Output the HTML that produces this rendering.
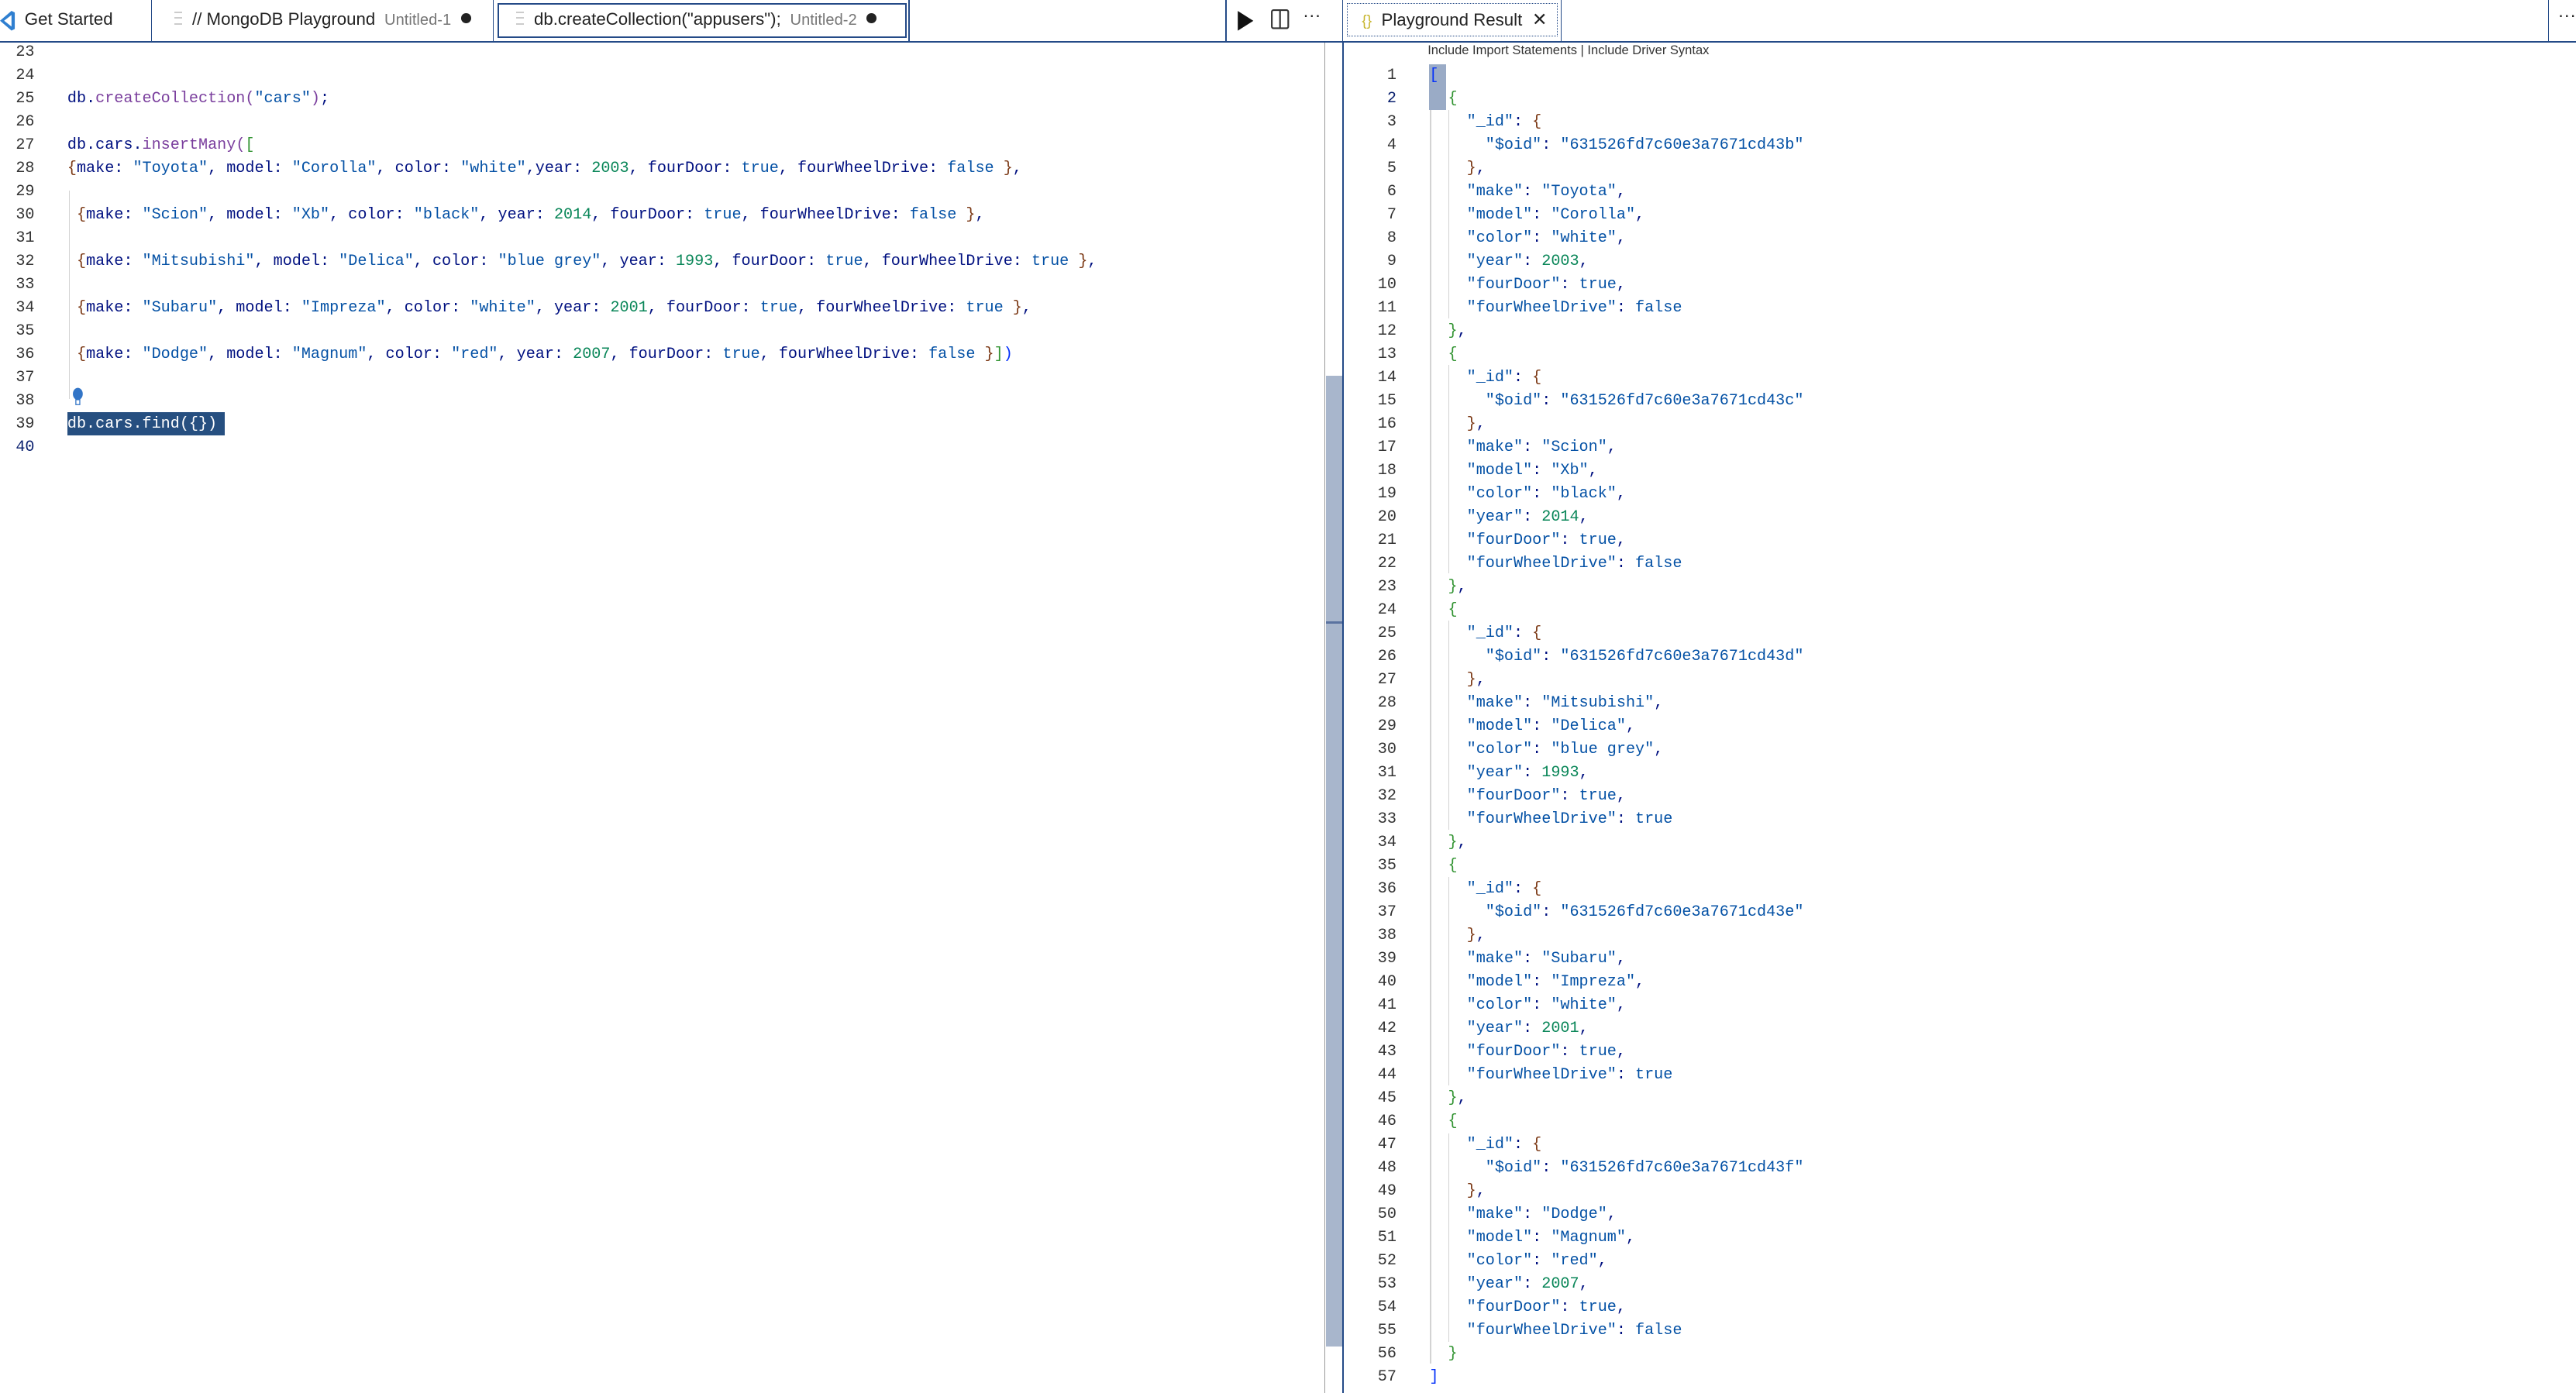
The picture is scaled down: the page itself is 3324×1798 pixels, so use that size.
<!DOCTYPE html>
<html><head><meta charset="utf-8"><style>
html,body{margin:0;padding:0;background:#fff;overflow:hidden}
#w{zoom:2.1199;width:1568px;height:848px;position:relative;overflow:hidden;font-family:"Liberation Sans",sans-serif}
.abs{position:absolute}
.tabbar{left:0;top:0;width:1568px;height:25px;border-bottom:1.3px solid #244a87}
.tab{position:absolute;top:0;height:25px;font-size:10.5px;color:#222;line-height:24px;white-space:nowrap}
.sep{position:absolute;top:0;width:0.6px;height:25px;background:#244a87}
.sub{color:#777;font-size:9.5px}
.dot{display:inline-block;width:6px;height:6px;border-radius:3px;background:#222;margin-left:6px;vertical-align:1px}
.fi{display:inline-block;width:5px;height:6px;border-top:1px solid #ccc;border-bottom:1px solid #ccc;margin-right:6px;vertical-align:0;position:relative}
.fi:after{content:"";position:absolute;left:0;top:2px;width:5px;border-top:1px solid #ccc}
.code{font-family:"Liberation Mono",monospace;font-size:9.5px;line-height:14.15px;white-space:pre;color:#001080}
.ln{text-align:right;color:#333}
.k{color:#001080}.s{color:#0451a5}.n{color:#098658}.b{color:#0000ff}.f{color:#7a3e9d}.br{color:#7b3814}.g{color:#319331}.bl{color:#0431fa}
.jk{color:#0451a5}.js{color:#0451a5}
</style></head><body><div id="w">
<div class="abs tabbar"></div>
<svg class="abs" style="left:0;top:6px" width="10" height="13" viewBox="0 0 10 13"><path d="M0 6.5 L7 0.5 L9 1.5 L9 11.5 L7 12.5 Z M2.5 6.5 L7 10 L7 3 Z" fill="#2f7fd0" fill-rule="evenodd"/></svg>
<div class="tab" style="left:15px">Get Started</div>
<div class="sep" style="left:92px"></div>
<div class="tab" style="left:106px"><span class="fi"></span>// MongoDB Playground <span class="sub">&nbsp;Untitled-1</span><span class="dot"></span></div>
<div class="sep" style="left:300px"></div>
<div class="abs" style="left:303px;top:2px;width:247px;height:19px;border:1px solid #244a87"></div>
<div class="tab" style="left:314px"><span class="fi"></span>db.createCollection("appusers"); <span class="sub">&nbsp;Untitled-2</span><span class="dot"></span></div>
<div class="sep" style="left:553px"></div>
<div class="sep" style="left:746px"></div>
<svg class="abs" style="left:752px;top:5px" width="12" height="15"><path d="M1.5 1.5 L11 7.5 L1.5 13.5Z" fill="#111"/></svg>
<svg class="abs" style="left:773px;top:5px" width="12" height="13"><rect x="1" y="1" width="10" height="11" rx="1" fill="none" stroke="#333" stroke-width="1"/><line x1="6" y1="1" x2="6" y2="12" stroke="#333"/></svg>
<div class="tab" style="left:793px;font-size:11px;top:-3px">···</div>
<div class="sep" style="left:817px"></div>
<div class="abs" style="left:820px;top:2px;width:127px;height:19px;border:0.6px dotted #244a87"></div>
<div class="tab" style="left:829px"><span style="color:#c7b52c;font-size:9px">{}</span>&nbsp; Playground Result <span style="font-size:11px;margin-left:3px">✕</span></div>
<div class="sep" style="left:950px"></div>
<div class="sep" style="left:1551px"></div>
<div class="tab" style="left:1557px;font-size:11px;top:-3px">···</div>

<!-- left editor -->
<div class="abs code ln" style="left:0;top:25px;width:21px">23
24
25
26
27
28
29
30
31
32
33
34
35
36
37
38
39
<span style="color:#0b216f">40</span></div>
<div class="abs" style="left:42px;top:116px;width:0.6px;height:127px;background:#d3d3d3"></div>
<div class="abs" style="left:41px;top:251px;width:96px;height:14px;background:#264f80"></div>
<svg class="abs" style="left:44px;top:236px" width="7" height="12"><ellipse cx="3.5" cy="4" rx="3" ry="3.7" fill="#3275c7"/><rect x="2.3" y="7.5" width="2.4" height="3" fill="#fff" stroke="#3275c7" stroke-width="0.6"/></svg>
<div class="abs code" style="left:41px;top:25px">

<span class="k">db</span>.<span class="f">createCollection</span><span class="f">(</span><span class="s">"cars"</span><span class="f">)</span>;

<span class="k">db</span>.<span class="k">cars</span>.<span class="f">insertMany</span><span class="f">(</span><span class="g">[</span>
<span class="br">{</span>make: <span class="s">"Toyota"</span>, model: <span class="s">"Corolla"</span>, color: <span class="s">"white"</span>,year: <span class="n">2003</span>, fourDoor: <span class="s">true</span>, fourWheelDrive: <span class="s">false</span> <span class="br">}</span>,

 <span class="br">{</span>make: <span class="s">"Scion"</span>, model: <span class="s">"Xb"</span>, color: <span class="s">"black"</span>, year: <span class="n">2014</span>, fourDoor: <span class="s">true</span>, fourWheelDrive: <span class="s">false</span> <span class="br">}</span>,

 <span class="br">{</span>make: <span class="s">"Mitsubishi"</span>, model: <span class="s">"Delica"</span>, color: <span class="s">"blue grey"</span>, year: <span class="n">1993</span>, fourDoor: <span class="s">true</span>, fourWheelDrive: <span class="s">true</span> <span class="br">}</span>,

 <span class="br">{</span>make: <span class="s">"Subaru"</span>, model: <span class="s">"Impreza"</span>, color: <span class="s">"white"</span>, year: <span class="n">2001</span>, fourDoor: <span class="s">true</span>, fourWheelDrive: <span class="s">true</span> <span class="br">}</span>,

 <span class="br">{</span>make: <span class="s">"Dodge"</span>, model: <span class="s">"Magnum"</span>, color: <span class="s">"red"</span>, year: <span class="n">2007</span>, fourDoor: <span class="s">true</span>, fourWheelDrive: <span class="s">false</span> <span class="br">}</span><span class="g">]</span><span class="bl">)</span>


<span style="color:#fff">db.cars.find({})</span>
</div>

<!-- scrollbar -->
<div class="abs" style="left:806px;top:26px;width:0.6px;height:822px;background:#999"></div>
<div class="abs" style="left:807px;top:229px;width:10px;height:591px;background:#a8b6cc"></div>
<div class="abs" style="left:807px;top:378.5px;width:10px;height:1.2px;background:#5a73a0"></div>
<div class="abs" style="left:817px;top:25px;width:0.9px;height:823px;background:#244a87"></div>

<!-- right editor -->
<div class="abs" style="left:869px;top:25px;font-size:7.8px;color:#333;line-height:11px">Include Import Statements | Include Driver Syntax</div>
<div class="abs code ln" style="left:821px;top:39px;width:29px">1
<span style="color:#0b216f">2</span>
3
4
5
6
7
8
9
10
11
12
13
14
15
16
17
18
19
20
21
22
23
24
25
26
27
28
29
30
31
32
33
34
35
36
37
38
39
40
41
42
43
44
45
46
47
48
49
50
51
52
53
54
55
56
57</div>
<div class="abs" style="left:870px;top:39px;width:10px;height:28px;background:#9aabc6"></div>
<div class="abs" style="left:870.5px;top:67px;width:0.6px;height:763px;background:#d3d3d3"></div>
<div class="abs" style="left:881.5px;top:67px;width:0.6px;height:127px;background:#d3d3d3"></div>
<div class="abs" style="left:881.5px;top:222px;width:0.6px;height:127px;background:#d3d3d3"></div>
<div class="abs" style="left:881.5px;top:378px;width:0.6px;height:127px;background:#d3d3d3"></div>
<div class="abs" style="left:881.5px;top:534px;width:0.6px;height:127px;background:#d3d3d3"></div>
<div class="abs" style="left:881.5px;top:690px;width:0.6px;height:127px;background:#d3d3d3"></div>
<div class="abs code" style="left:870px;top:39px"><span class="bl">[</span>
  <span class="g">{</span>
    <span class="jk">"_id"</span>: <span class="br">{</span>
      <span class="jk">"$oid"</span>: <span class="js">"631526fd7c60e3a7671cd43b"</span>
    <span class="br">}</span>,
    <span class="jk">"make"</span>: <span class="js">"Toyota"</span>,
    <span class="jk">"model"</span>: <span class="js">"Corolla"</span>,
    <span class="jk">"color"</span>: <span class="js">"white"</span>,
    <span class="jk">"year"</span>: <span class="n">2003</span>,
    <span class="jk">"fourDoor"</span>: <span class="js">true</span>,
    <span class="jk">"fourWheelDrive"</span>: <span class="js">false</span>
  <span class="g">}</span>,
  <span class="g">{</span>
    <span class="jk">"_id"</span>: <span class="br">{</span>
      <span class="jk">"$oid"</span>: <span class="js">"631526fd7c60e3a7671cd43c"</span>
    <span class="br">}</span>,
    <span class="jk">"make"</span>: <span class="js">"Scion"</span>,
    <span class="jk">"model"</span>: <span class="js">"Xb"</span>,
    <span class="jk">"color"</span>: <span class="js">"black"</span>,
    <span class="jk">"year"</span>: <span class="n">2014</span>,
    <span class="jk">"fourDoor"</span>: <span class="js">true</span>,
    <span class="jk">"fourWheelDrive"</span>: <span class="js">false</span>
  <span class="g">}</span>,
  <span class="g">{</span>
    <span class="jk">"_id"</span>: <span class="br">{</span>
      <span class="jk">"$oid"</span>: <span class="js">"631526fd7c60e3a7671cd43d"</span>
    <span class="br">}</span>,
    <span class="jk">"make"</span>: <span class="js">"Mitsubishi"</span>,
    <span class="jk">"model"</span>: <span class="js">"Delica"</span>,
    <span class="jk">"color"</span>: <span class="js">"blue grey"</span>,
    <span class="jk">"year"</span>: <span class="n">1993</span>,
    <span class="jk">"fourDoor"</span>: <span class="js">true</span>,
    <span class="jk">"fourWheelDrive"</span>: <span class="js">true</span>
  <span class="g">}</span>,
  <span class="g">{</span>
    <span class="jk">"_id"</span>: <span class="br">{</span>
      <span class="jk">"$oid"</span>: <span class="js">"631526fd7c60e3a7671cd43e"</span>
    <span class="br">}</span>,
    <span class="jk">"make"</span>: <span class="js">"Subaru"</span>,
    <span class="jk">"model"</span>: <span class="js">"Impreza"</span>,
    <span class="jk">"color"</span>: <span class="js">"white"</span>,
    <span class="jk">"year"</span>: <span class="n">2001</span>,
    <span class="jk">"fourDoor"</span>: <span class="js">true</span>,
    <span class="jk">"fourWheelDrive"</span>: <span class="js">true</span>
  <span class="g">}</span>,
  <span class="g">{</span>
    <span class="jk">"_id"</span>: <span class="br">{</span>
      <span class="jk">"$oid"</span>: <span class="js">"631526fd7c60e3a7671cd43f"</span>
    <span class="br">}</span>,
    <span class="jk">"make"</span>: <span class="js">"Dodge"</span>,
    <span class="jk">"model"</span>: <span class="js">"Magnum"</span>,
    <span class="jk">"color"</span>: <span class="js">"red"</span>,
    <span class="jk">"year"</span>: <span class="n">2007</span>,
    <span class="jk">"fourDoor"</span>: <span class="js">true</span>,
    <span class="jk">"fourWheelDrive"</span>: <span class="js">false</span>
  <span class="g">}</span>
<span class="bl">]</span></div>
</div></body></html>
